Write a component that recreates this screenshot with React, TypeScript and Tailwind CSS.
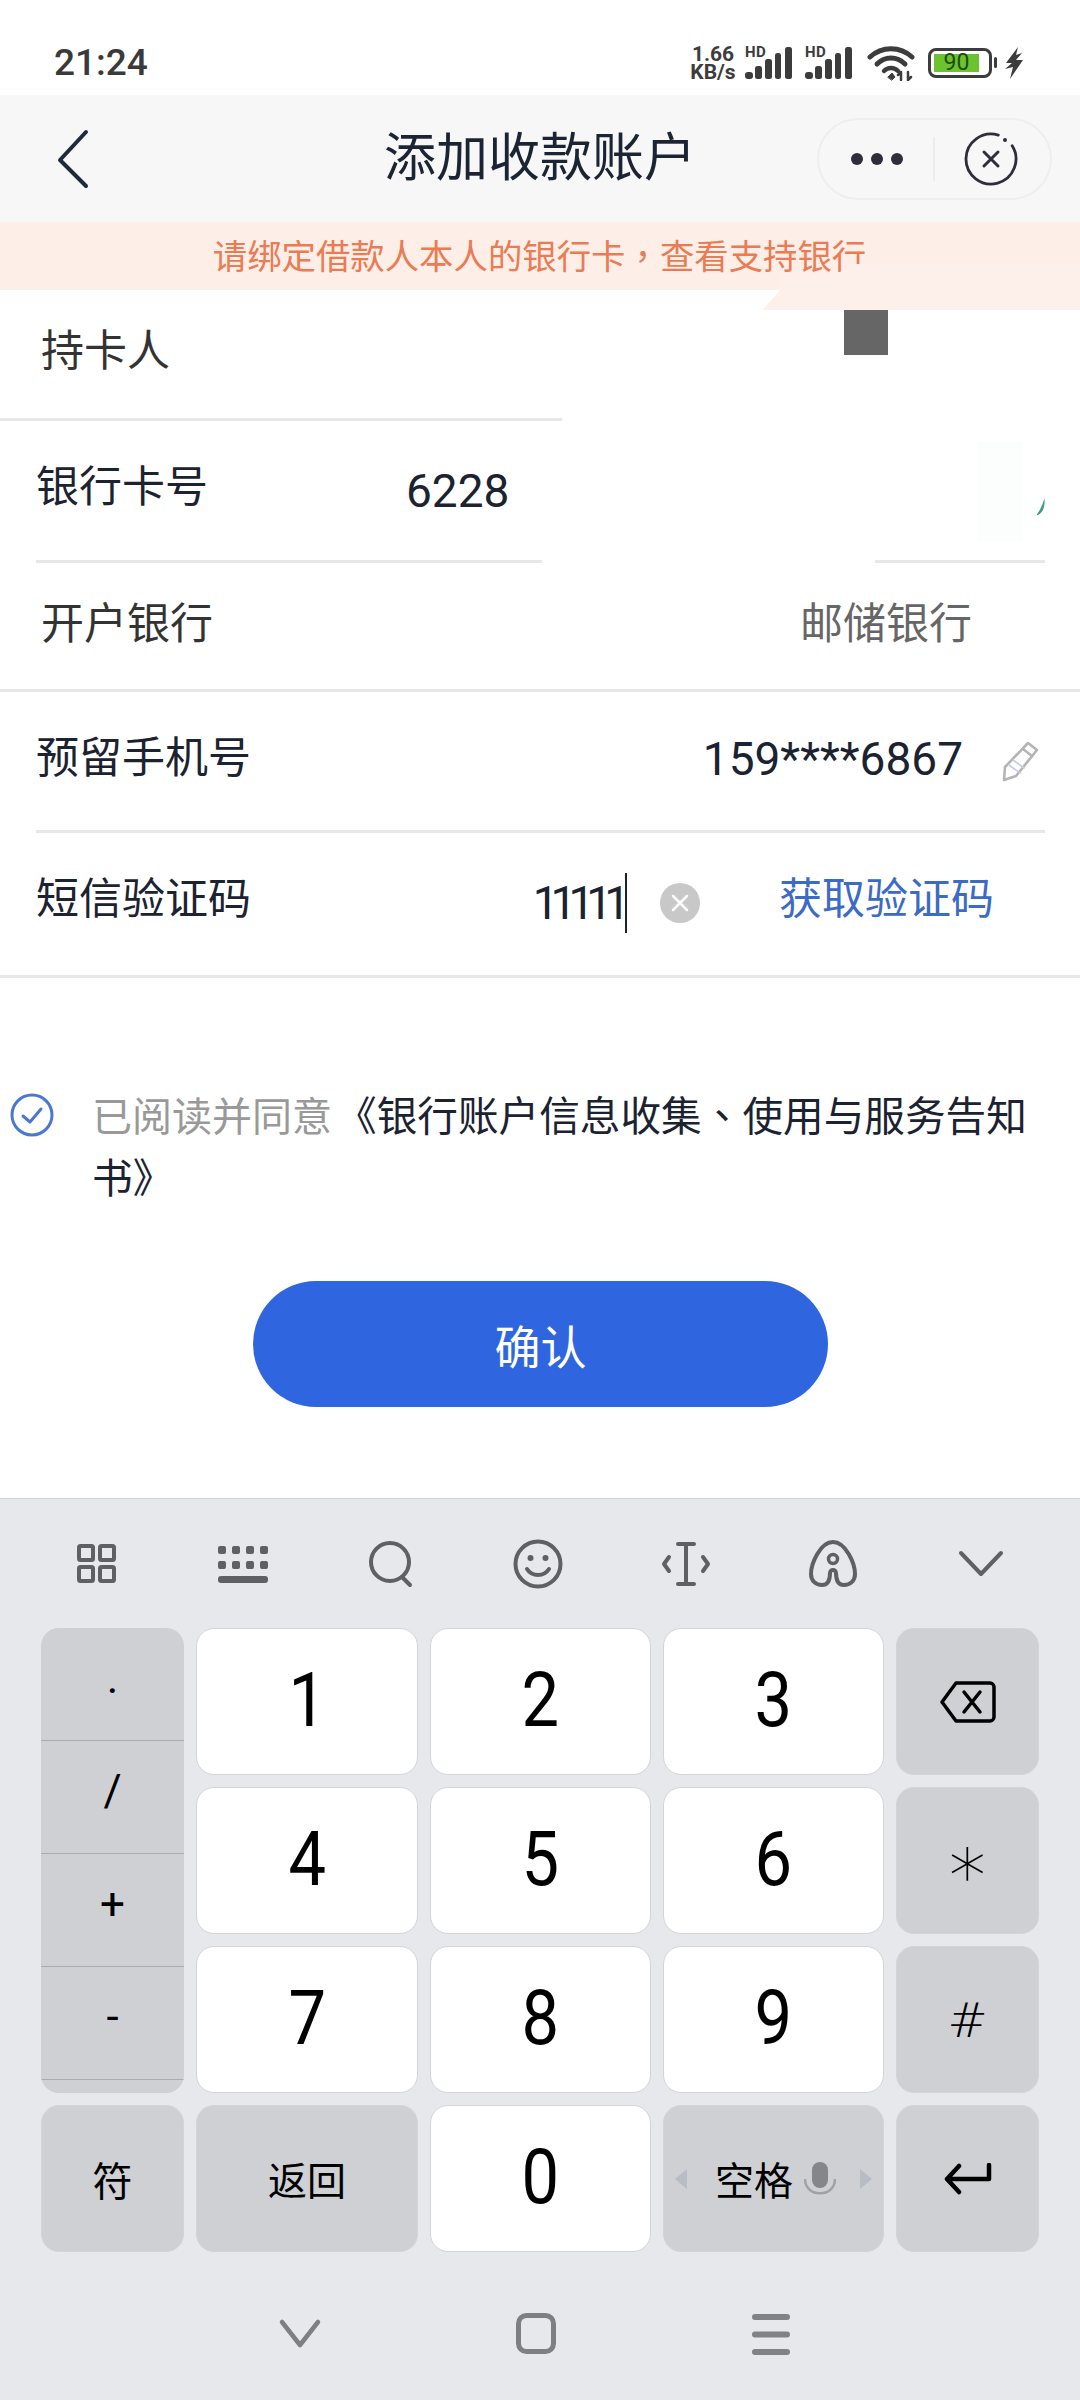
const cjk = "font-['Noto_Sans_CJK_SC','Noto_Sans',sans-serif]";
const cjkCentered = "font-['Noto_Sans_CJK_TC','Noto_Sans',sans-serif]";

function Signal() {
  return (
    <div className="relative w-[50px] h-[34px] shrink-0">
      <span className="absolute left-0 -top-[1px] text-[15px] leading-none font-bold text-[#3c3c3c] font-['Roboto',sans-serif] tracking-[0.5px]">
        HD
      </span>
      <svg width="50" height="34" viewBox="0 0 50 34" className="absolute left-0 top-0" fill="#3c3c3c">
        <rect x="0" y="26" width="8" height="7" rx="3" />
        <rect x="10" y="20" width="7" height="13" rx="2.5" />
        <rect x="20" y="13" width="7" height="20" rx="2.5" />
        <rect x="30" y="7" width="6" height="26" rx="2.5" />
        <rect x="40" y="1" width="7" height="32" rx="2.5" />
      </svg>
    </div>
  );
}

function StatusBar() {
  return (
    <div className="h-[95px] bg-white flex items-center justify-between pl-[54px] pr-[56px] pt-[30px] font-['Roboto',sans-serif]">
      <span className="text-[37px] leading-none font-medium text-[#3a3a3a]">21:24</span>
      <div className="flex items-center">
        <div className="w-[50px] flex flex-col text-[#3c3c3c] font-bold text-[21px] leading-[18px] text-center">
          <span>1.66</span>
          <span>KB/s</span>
        </div>
        <div className="ml-[7px]">
          <Signal />
        </div>
        <div className="ml-[10px]">
          <Signal />
        </div>
        <svg width="48" height="36" viewBox="0 0 48 36" className="ml-[12px]" fill="none" stroke="#3c3c3c" strokeLinecap="round">
          <path d="M3 12C15 1 33 1 45 12" strokeWidth="5" />
          <path d="M10 19C18 11 30 11 38 19" strokeWidth="5" />
          <path d="M17 26C21 22 27 22 31 26" strokeWidth="4.5" />
          <path d="M21 32L25 28L28 32L25 35Z" fill="#3c3c3c" strokeWidth="1" />
          <path d="M34 35V27M34 27L31 30M41 27V35M41 35L44 32" strokeWidth="2.5" />
        </svg>
        <div className="ml-[13px] relative w-[64px] h-[30px] rounded-[8px] border-[3px] border-[#3c3c3c] p-[3px]">
          <div className="w-[45px] h-full bg-[#6cc22f] flex items-center justify-center text-[23px] leading-none text-[#1f4d0c]">
            90
          </div>
        </div>
        <div className="ml-[2px] w-[3px] h-[11px] rounded-[2px] bg-[#3c3c3c]" />
        <svg width="20" height="32" viewBox="0 0 20 32" className="ml-[7px]" fill="#3c3c3c">
          <path d="M14 0L2 16H8L1 22L9 20L6 32L19 13H12L18 6L12 8Z" />
        </svg>
      </div>
    </div>
  );
}

function NavBar() {
  return (
    <div className={`h-[127px] bg-[#f7f7f7] grid grid-cols-[1fr_auto_1fr] items-center ${cjk}`}>
      <svg width="34" height="60" viewBox="0 0 34 60" className="ml-[56px]" fill="none" stroke="#1f2a3a" strokeWidth="4" strokeLinecap="round" strokeLinejoin="round">
        <path d="M30 3L4 31L30 57" />
      </svg>
      <h1 className="text-[52px] leading-none font-normal text-[#1a2433] -mt-[10px]">添加收款账户</h1>
      <div className="justify-self-end mr-[28px] w-[235px] h-[82px] rounded-full border-2 border-[#eeeef0] flex items-center">
        <div className="w-[114px] flex items-center justify-center gap-[8px] pl-[2px]">
          <span className="w-[12px] h-[12px] rounded-full bg-[#2e2e3a]" />
          <span className="w-[12px] h-[12px] rounded-full bg-[#2e2e3a]" />
          <span className="w-[12px] h-[12px] rounded-full bg-[#2e2e3a]" />
        </div>
        <div className="w-[2px] h-[44px] bg-[#ececee]" />
        <svg width="56" height="56" viewBox="0 0 56 56" className="ml-[28px]" fill="none" stroke="#2e2e3a" strokeLinecap="round">
          <path d="M49.2 14.8A25 25 0 1 1 35.3 4.1" strokeWidth="2.8" />
          <circle cx="42" cy="9" r="2" fill="#2e2e3a" stroke="none" />
          <path d="M21 21L35 35M35 21L21 35" strokeWidth="3" />
        </svg>
      </div>
    </div>
  );
}

function Banner() {
  return (
    <div className={`h-[68px] bg-[#fdeee8] flex items-center justify-center ${cjk}`}>
      <span className="text-[34.4px] leading-none text-[#ea7b52] pb-[4px] -ml-[1px] whitespace-nowrap">
        请绑定借款人本人的银行卡<span className={cjkCentered}>，</span>查看支持银行
      </span>
    </div>
  );
}

function Divider({ className = '' }: { className?: string }) {
  return <div className={`h-[3px] bg-[#e7e7e8] ${className}`} />;
}

function ClearIcon() {
  return (
    <svg width="40" height="40" viewBox="0 0 40 40" className="ml-[33px] mt-[15px] shrink-0">
      <circle cx="20" cy="20" r="20" fill="#c8c8c9" />
      <path d="M13 13L27 27M27 13L13 27" stroke="#fff" strokeWidth="2.5" strokeLinecap="round" />
    </svg>
  );
}

function PencilIcon() {
  return (
    <svg width="40" height="42" viewBox="0 0 40 42" fill="none" stroke="#b4b4b6" strokeWidth="2.6" strokeLinejoin="round" strokeLinecap="round">
      <path d="M28 3L37 10L16 36L4 40L5 27Z" />
      <path d="M23 9L32 16" />
      <path d="M9 25L20 33M13 20L24 28" strokeWidth="1.6" stroke="#c6cbe0" />
    </svg>
  );
}

function BankForm() {
  return (
    <div className={`${cjk} text-[43px] leading-none`}>
      <div className="relative h-[128px] flex items-center pl-[41px] pb-[14px] text-[#333]">
        持卡人
        <div className="absolute left-[844px] top-[20px] w-[44px] h-[45px] bg-[#666]" />
      </div>
      <Divider className="w-[562px]" />

      <div className="relative h-[139px] flex items-center pl-[36px] pb-[14px] text-[#1b2230]">
        银行卡号
        <span className="ml-[198px] mt-[15px] text-[46px] font-['Roboto',sans-serif]">6228</span>
        <div className="absolute left-[977px] top-[20px] w-[46px] h-[100px] bg-[#fcfefe]" />
        <svg width="10" height="20" viewBox="0 0 10 20" className="absolute left-[1036px] top-[76px]" fill="#3e9d84">
          <path d="M8.5 1C9 8 8 15 2 18C1 18.5 0.5 18 1.5 16.5C4 13 6.5 8 8.5 1Z" />
        </svg>
      </div>
      <div className="flex justify-between pl-[36px] pr-[35px]">
        <Divider className="w-[506px]" />
        <Divider className="w-[170px]" />
      </div>

      <div className="h-[126px] flex items-center justify-between pl-[41px] pr-[108px] pb-[12px] text-[#333]">
        开户银行
        <span className="text-[#666]">邮储银行</span>
      </div>
      <Divider />

      <div className="h-[138px] flex items-center pl-[36px] pr-[40px] pb-[14px] text-[#1b2230]">
        预留手机号
        <span className="ml-auto mt-[10px] text-[46px] font-['Roboto',sans-serif]">159****6867</span>
        <div className="ml-[37px] mt-[14px]">
          <PencilIcon />
        </div>
      </div>
      <Divider className="ml-[36px] mr-[35px]" />

      <div className="h-[142px] flex items-center pl-[36px] pr-[86px] pb-[17px] text-[#1b2230]">
        短信验证码
        <span className="ml-auto mt-[15px] text-[46px] tracking-[-8px] font-['Roboto',sans-serif]">11111</span>
        <span className="ml-[3px] mt-[15px] w-[2px] h-[60px] bg-[#1b2230]" />
        <ClearIcon />
        <span className="ml-[79px] text-[#3b6bc4]">获取验证码</span>
      </div>
      <Divider />
    </div>
  );
}

function Agreement() {
  return (
    <div className={`mt-[105px] flex pl-[10px] pr-[50px] ${cjk}`}>
      <svg width="44" height="44" viewBox="0 0 44 44" className="mt-[10px] shrink-0" fill="none" stroke="#4a78d0" strokeLinecap="round" strokeLinejoin="round">
        <circle cx="22" cy="22" r="20" strokeWidth="3" />
        <path d="M13 23L20 29L31 16" strokeWidth="3" />
      </svg>
      <p className="ml-[38px] text-[40.65px] leading-[61px] text-[#1b2230]">
        <span className="text-[40px] text-[#999]">已阅读并同意</span>
        <span className="ml-[4px]">
          《银行账户信息收集<span className={cjkCentered}>、</span>使用与服务告知书》
        </span>
      </p>
    </div>
  );
}

function ToolbarIcon({ children, box = '0 0 50 50' }: { children: React.ReactNode; box?: string }) {
  return (
    <svg width="50" height="50" viewBox={box} fill="none" stroke="#5f6063" strokeWidth="4" strokeLinecap="round" strokeLinejoin="round">
      {children}
    </svg>
  );
}

function Toolbar() {
  return (
    <div className="h-[129px] pl-[22px] w-[1054.5px] grid grid-cols-7 items-center justify-items-center">
      <ToolbarIcon>
        <rect x="8" y="7" width="14" height="14" rx="1.5" strokeWidth="4" />
        <rect x="29" y="7" width="14" height="14" rx="1.5" strokeWidth="4" />
        <rect x="8" y="28" width="14" height="14" rx="1.5" strokeWidth="4" />
        <rect x="29" y="28" width="14" height="14" rx="1.5" strokeWidth="4" />
      </ToolbarIcon>
      <ToolbarIcon>
        <g fill="#5f6063" stroke="none">
          <rect x="0" y="7" width="8" height="8" rx="2" />
          <rect x="14" y="7" width="8" height="8" rx="2" />
          <rect x="28" y="7" width="8" height="8" rx="2" />
          <rect x="42" y="7" width="8" height="8" rx="2" />
          <rect x="0" y="22" width="8" height="8" rx="2" />
          <rect x="14" y="22" width="8" height="8" rx="2" />
          <rect x="28" y="22" width="8" height="8" rx="2" />
          <rect x="42" y="22" width="8" height="8" rx="2" />
          <rect x="0" y="37" width="50" height="7" rx="3" />
        </g>
      </ToolbarIcon>
      <ToolbarIcon>
        <circle cx="24" cy="23" r="19" />
        <path d="M36 38L44 46" />
      </ToolbarIcon>
      <ToolbarIcon>
        <circle cx="25" cy="25" r="22.5" />
        <circle cx="17.5" cy="19" r="3" fill="#5f6063" stroke="none" />
        <circle cx="32.5" cy="19" r="3" fill="#5f6063" stroke="none" />
        <path d="M14 30C19 38 31 38 36 30" />
      </ToolbarIcon>
      <ToolbarIcon>
        <path d="M17 5H33M25 5V45M17 45H33" />
        <path d="M8 18L3 25L8 32M42 18L47 25L42 32" />
      </ToolbarIcon>
      <ToolbarIcon>
        <path d="M25 3C12 3 3 25 3 35C3 42 8 46 14 46C21 46 22 40 22 34C22 30 28 30 28 34C28 40 29 46 36 46C42 46 47 42 47 35C47 25 38 3 25 3Z" />
        <circle cx="25" cy="20" r="4.5" strokeWidth="3.5" />
      </ToolbarIcon>
      <ToolbarIcon>
        <path d="M5 14L25 35L45 14" />
      </ToolbarIcon>
    </div>
  );
}

const keyBase = 'h-[147px] rounded-[18px] flex items-center justify-center border border-[#d3d4d8]';
const whiteKey = `${keyBase} bg-white text-[76px] font-['Roboto',sans-serif] text-black leading-none pb-[4px]`;
const greyKey = `${keyBase} bg-[#ced0d4] text-black`;

function DigitKey({ value }: { value: string }) {
  return (
    <div className={whiteKey}>
      <span className="inline-block scale-x-[0.88]">{value}</span>
    </div>
  );
}

function SymbolColumn() {
  return (
    <div className="row-span-3 h-[465px] rounded-[18px] overflow-hidden bg-[#ced0d4] font-['Roboto',sans-serif] text-[44px] leading-none text-black">
      {['.', '/', '+', '-'].map((symbol) => (
        <div key={symbol} className="h-[113px] flex items-center justify-center border-b border-[#a9abaf] pb-[12px]">
          {symbol}
        </div>
      ))}
    </div>
  );
}

function Keypad() {
  return (
    <div className="grid grid-cols-[143px_222px_221px_221px_143px] gap-x-[12px] gap-y-[12px] pl-[41px]">
      <SymbolColumn />
      <DigitKey value="1" />
      <DigitKey value="2" />
      <DigitKey value="3" />
      <div className={greyKey}>
        <svg width="56" height="42" viewBox="0 0 56 42" fill="none" stroke="#000" strokeWidth="3.5" strokeLinejoin="round" strokeLinecap="round">
          <path d="M16 2H50C52 2 54 4 54 6V36C54 38 52 40 50 40H16L2 21Z" />
          <path d="M24 11L40 31M40 11L24 31" />
        </svg>
      </div>

      <DigitKey value="4" />
      <DigitKey value="5" />
      <DigitKey value="6" />
      <div className={`${greyKey} text-[74px] leading-none font-extralight font-['DejaVu_Sans',sans-serif]`}>∗</div>

      <DigitKey value="7" />
      <DigitKey value="8" />
      <DigitKey value="9" />
      <div className={`${greyKey} text-[48px] leading-none font-extralight font-['DejaVu_Sans',sans-serif]`}>#</div>

      <div className={`${greyKey} ${cjk} text-[40px] leading-none`}>符</div>
      <div className={`${greyKey} ${cjk} text-[39px] leading-none`}>返回</div>
      <DigitKey value="0" />
      <div className={`${greyKey} ${cjk} text-[39px] leading-none gap-[11px]`}>
        <svg width="12" height="20" viewBox="0 0 12 20" fill="#b8bcc4">
          <path d="M12 0V20L0 10Z" />
        </svg>
        <span className="ml-[17px]">空格</span>
        <svg width="32" height="34" viewBox="0 0 32 34" fill="none">
          <rect x="8" y="0" width="16" height="26" rx="8" fill="#85868a" />
          <path d="M1 17C1 36 31 36 31 17" stroke="#a0a1a5" strokeWidth="2.5" />
        </svg>
        <svg width="12" height="20" viewBox="0 0 12 20" fill="#b8bcc4" className="ml-[13px]">
          <path d="M0 0V20L12 10Z" />
        </svg>
      </div>
      <div className={greyKey}>
        <svg width="48" height="32" viewBox="0 0 48 32" fill="none" stroke="#000" strokeWidth="4.5" strokeLinecap="round" strokeLinejoin="round">
          <path d="M45 2V16H3M15 3L3 16L15 29" />
        </svg>
      </div>
    </div>
  );
}

function SystemNav() {
  return (
    <div className="mt-[51px] flex pl-[270px] gap-[175.5px]">
      <svg width="60" height="60" viewBox="0 0 60 60" fill="none" stroke="#7d7f83" strokeWidth="4.5" strokeLinecap="round" strokeLinejoin="round">
        <path d="M12 19L30 42L48 19" />
      </svg>
      <svg width="60" height="60" viewBox="0 0 60 60" fill="none" stroke="#7d7f83" strokeWidth="5">
        <rect x="12.5" y="12.5" width="35" height="36" rx="8" />
      </svg>
      <svg width="60" height="60" viewBox="0 0 60 60" fill="none" stroke="#808285" strokeWidth="6" strokeLinecap="round">
        <path d="M14 14H46M14 31.5H46M14 49H46" />
      </svg>
    </div>
  );
}

export default function App() {
  return (
    <div className="relative w-[1080px] h-[2400px] bg-white overflow-hidden flex flex-col">
      <StatusBar />
      <NavBar />
      <Banner />
      <BankForm />
      <Agreement />
      <div className="mt-[75px] flex pl-[253px]">
        <button className={`w-[575px] h-[126px] rounded-full bg-[#2f66e0] text-white text-[46px] ${cjk}`}>确认</button>
      </div>

      <div className="mt-auto h-[902px] bg-[#e6e8ec] border-t border-[#d0d1d4]">
        <Toolbar />
        <Keypad />
        <SystemNav />
      </div>

      {/* torn corner of the notice strip */}
      <div className="absolute left-[763px] top-[264px] w-[317px] h-[46px] bg-[#fdf0ea] [clip-path:polygon(89px_0,100%_0,100%_100%,0_100%,17px_26px,17px_8px,77px_8px)]" />
    </div>
  );
}
